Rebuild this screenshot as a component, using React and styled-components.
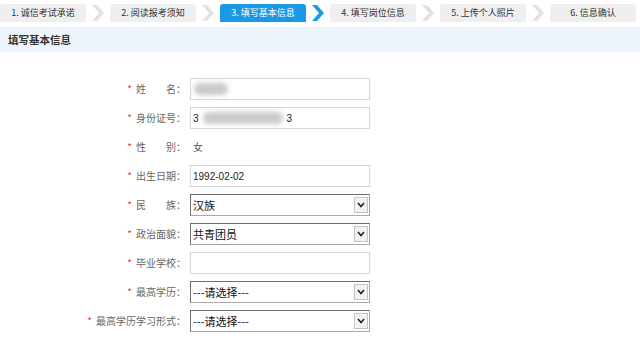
import React from "react";
import styled, { createGlobalStyle } from "styled-components";

const GlobalStyle = createGlobalStyle`
    body {
        margin: 0;
        background: #fff;
        font-family: "Noto Sans CJK SC", "Liberation Sans", sans-serif;
        color: #333;
    }
`;

const Page = styled.div`
    width: 640px;
    height: 340px;
    overflow: hidden;
`;

const StepBar = styled.div`
    display: flex;
    align-items: flex-start;
    padding-top: 4px;
    height: 23px;
`;

const Step = styled.div`
    width: 86px;
    height: 18px;
    flex-shrink: 0;
    border-radius: 3px 3px 0 0;
    background: ${(p) => (p.$active ? "#1a9ae6" : "#efefef")};
    color: ${(p) => (p.$active ? "#fff" : "#333")};
    font-size: 9px;
    line-height: 18px;
    text-align: center;
    white-space: nowrap;
`;

const ArrowCell = styled.div`
    width: 24px;
    height: 18px;
    flex-shrink: 0;
    display: flex;
    align-items: center;
    justify-content: center;
`;

const SectionHead = styled.div`
    height: 25px;
    line-height: 25px;
    background: #edf4fc;
    padding-left: 8px;
    font-size: 10.5px;
    font-weight: bold;
    color: #333;
`;

const Form = styled.div`
    display: grid;
    grid-template-columns: 186px 180px;
    column-gap: 4px;
    row-gap: 7px;
    margin-top: 26px;
`;

const Label = styled.div`
    height: 22px;
    line-height: 22px;
    text-align: right;
    font-size: 10px;
    color: #666;
    white-space: nowrap;
`;

const Star = styled.span`
    color: #e4393c;
    margin-right: 4px;
`;

const TextBox = styled.div`
    height: 22px;
    box-sizing: border-box;
    border: 1px solid #d6d6d6;
    background: #fff;
    display: flex;
    align-items: center;
    padding-left: 2px;
    font-size: 10px;
    color: #222;
    font-family: "Liberation Sans", "Noto Sans CJK SC", sans-serif;
`;

const Plain = styled.div`
    height: 22px;
    line-height: 22px;
    padding-left: 3px;
    font-size: 10px;
    color: #555;
`;

const Blur = styled.span`
    display: inline-block;
    width: ${(p) => p.$w}px;
    height: 12px;
    margin: 0 ${(p) => p.$mx || 0}px;
    border-radius: 6px;
    background: #c9c9c9;
    filter: blur(2.5px);
`;

const SelectBox = styled.div`
    height: 22px;
    box-sizing: border-box;
    border: 1px solid #a8a8a8;
    border-top-color: #6e6e6e;
    border-left-color: #6e6e6e;
    display: flex;
    align-items: center;
    background: #fff;
`;

const SelectText = styled.span`
    flex: 1;
    padding-left: 2px;
    font-size: 11px;
    color: #111;
`;

const DropBtn = styled.span`
    width: 14px;
    height: 16px;
    margin-right: 1px;
    box-sizing: border-box;
    border: 1px solid #c4c4c4;
    background: #f2f2f2;
    display: flex;
    align-items: center;
    justify-content: center;
`;

const steps = [
    "1. 诚信考试承诺",
    "2. 阅读报考须知",
    "3. 填写基本信息",
    "4. 填写岗位信息",
    "5. 上传个人照片",
    "6. 信息确认",
];

const Chevron = ({ color }) => (
    <svg width="12" height="16" viewBox="0 0 12 16">
        <polygon points="0,0 5,0 12,8 5,16 0,16 7,8" fill={color} />
    </svg>
);

const Select = ({ value }) => (
    <SelectBox>
        <SelectText>{value}</SelectText>
        <DropBtn>
            <svg width="8" height="6" viewBox="0 0 8 6">
                <polyline points="1,1 4,4.5 7,1" fill="none" stroke="#222" strokeWidth="1.6" />
            </svg>
        </DropBtn>
    </SelectBox>
);

const Field = ({ label, children }) => (
    <>
        <Label>
            <Star>*</Star>
            {label}
        </Label>
        {children}
    </>
);

const App = () => {
    return (
        <Page>
            <GlobalStyle />
            <StepBar>
                {steps.map((s, i) => (
                    <React.Fragment key={s}>
                        <Step $active={i === 2}>{s}</Step>
                        {i < steps.length - 1 && (
                            <ArrowCell>
                                <Chevron color={i === 2 ? "#1a9ae6" : "#e2e2e2"} />
                            </ArrowCell>
                        )}
                    </React.Fragment>
                ))}
            </StepBar>
            <SectionHead>填写基本信息</SectionHead>
            <Form>
                <Field label="姓　　名：">
                    <TextBox>
                        <Blur $w={34} $mx={1} />
                    </TextBox>
                </Field>
                <Field label="身份证号：">
                    <TextBox>
                        3<Blur $w={80} $mx={4} />3
                    </TextBox>
                </Field>
                <Field label="性　　别：">
                    <Plain>女</Plain>
                </Field>
                <Field label="出生日期：">
                    <TextBox>1992-02-02</TextBox>
                </Field>
                <Field label="民　　族：">
                    <Select value="汉族" />
                </Field>
                <Field label="政治面貌：">
                    <Select value="共青团员" />
                </Field>
                <Field label="毕业学校：">
                    <TextBox />
                </Field>
                <Field label="最高学历：">
                    <Select value="---请选择---" />
                </Field>
                <Field label="最高学历学习形式：">
                    <Select value="---请选择---" />
                </Field>
            </Form>
        </Page>
    );
};

export default App;
